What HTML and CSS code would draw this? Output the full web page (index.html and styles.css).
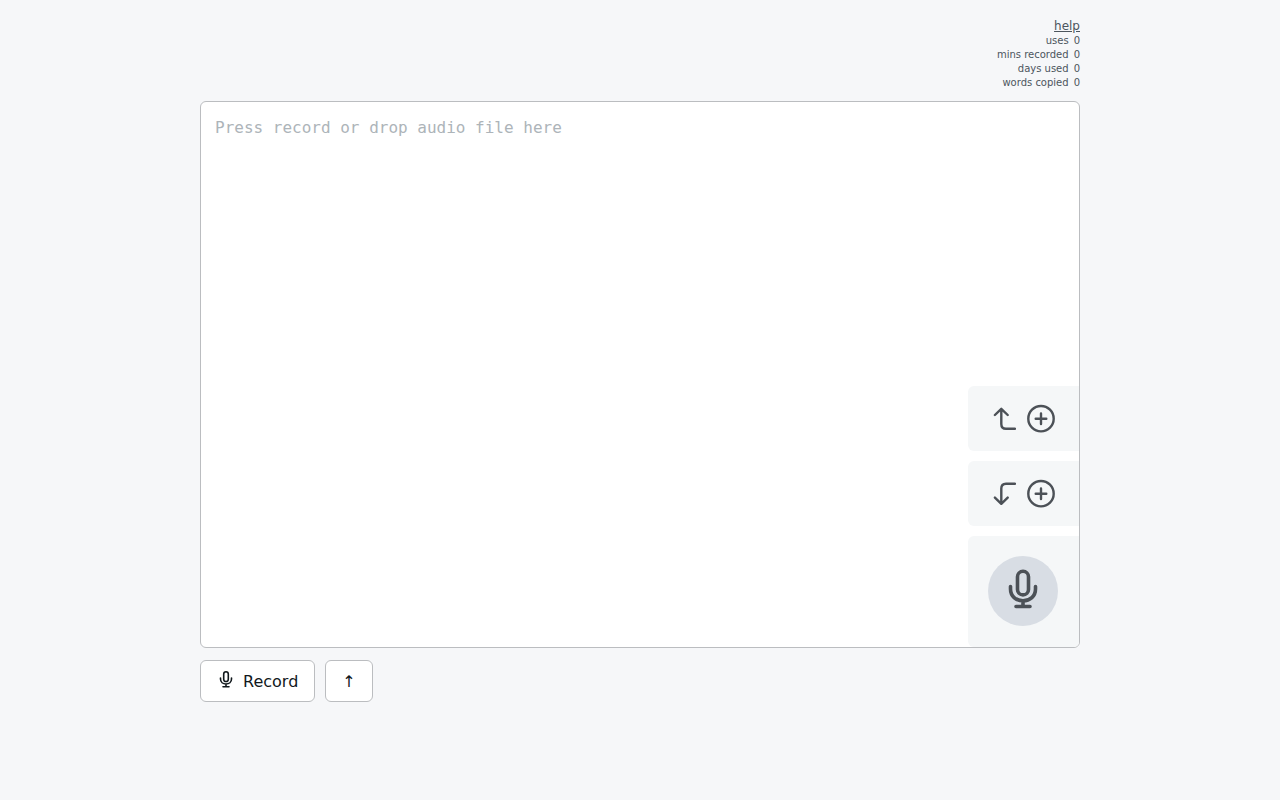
FILE: index.html
```html
<!DOCTYPE html>
<html lang="en">
<head>
<meta charset="utf-8">
<title>Voice recorder</title>
<meta name="viewport" content="width=device-width, initial-scale=1">
<link rel="stylesheet" href="styles.css">
</head>
<body>
<main class="page">
  <header class="top">
    <a class="help" href="#">help</a>
    <table class="stats">
      <tr><th scope="row">uses</th><td>0</td></tr>
      <tr><th scope="row">mins recorded</th><td>0</td></tr>
      <tr><th scope="row">days used</th><td>0</td></tr>
      <tr><th scope="row">words copied</th><td>0</td></tr>
    </table>
  </header>

  <section class="editor">
    <textarea class="text" aria-label="Transcript" placeholder="Press record or drop audio file here"></textarea>
    <div class="tools">
      <button class="tool" type="button" aria-label="Add above">
        <svg class="icon" width="24" height="31" viewBox="0 0 24 31"><path d="M2.900 12 9.300 5.800 15.700 12M9.300 6V21Q9.300 25.800 14 25.800H23"/></svg>
        <svg class="icon" width="30" height="31" viewBox="0 0 30 31"><circle cx="15" cy="15.700" r="12.700"/><path d="M15 10.400V21M9.700 15.700H20.300"/></svg>
      </button>
      <button class="tool" type="button" aria-label="Add below">
        <svg class="icon" width="24" height="31" viewBox="0 0 24 31"><path d="M2.900 19.600 9.300 25.800 15.700 19.600M9.300 25.600V10.600Q9.300 5.800 14 5.800H23"/></svg>
        <svg class="icon" width="30" height="31" viewBox="0 0 30 31"><circle cx="15" cy="15.700" r="12.700"/><path d="M15 10.400V21M9.700 15.700H20.300"/></svg>
      </button>
      <button class="tool tool-mic" type="button" aria-label="Record audio">
        <span class="disc">
          <svg class="icon icon-mic" width="40" height="44" viewBox="0 0 40 44"><rect x="14.500" y="2.300" width="11" height="23.600" rx="5.500"/><path d="M7.500 17.500V20C7.500 27.300 13 31.800 20 31.800S32.500 27.300 32.500 20V17.500M20 32V37.500M13 37.500H27"/></svg>
        </span>
      </button>
    </div>
  </section>

  <div class="actions">
    <button class="btn" type="button">
      <svg class="btn-icon" width="16" height="20" viewBox="0 0 16 20"><rect x="5.700" y="1.800" width="4.600" height="9.700" rx="2.300"/><path d="M2.500 8V9C2.500 12.200 5 14 8 14S13.500 12.200 13.500 9V8M8 14V16.800M5 16.800H11"/></svg>
      Record
    </button>
    <button class="btn" type="button" aria-label="Upload">↑</button>
  </div>
</main>
</body>
</html>
```
FILE: styles.css
```css
* {
  box-sizing: border-box;
}

body {
  margin: 0;
  background: #f6f7f9;
  color: #11181c;
  font-family: "DejaVu Sans", sans-serif;
}

.page {
  display: flex;
  flex-direction: column;
  min-height: 100vh;
  max-width: 880px;
  margin: 0 auto;
  padding: 18px 0 98px;
}

.top {
  display: flex;
  flex-direction: column;
  align-items: flex-end;
  margin-bottom: 11px;
  color: #4c555d;
}

.help {
  color: inherit;
  font-size: 12px;
  line-height: 16px;
}

.stats {
  border-spacing: 0;
  font-size: 10px;
  line-height: 14px;
  text-align: right;
}

.stats th,
.stats td {
  padding: 0;
  font-weight: normal;
  text-align: right;
}

.stats td {
  padding-left: 5px;
}

.editor {
  position: relative;
  display: flex;
  flex: 1;
  overflow: hidden;
  border: 1px solid #bbbdc0;
  border-radius: 6px;
  background: #fff;
}

.text {
  flex: 1;
  min-width: 0;
  padding: 14px;
  border: 0;
  outline: 0;
  resize: none;
  background: transparent;
  color: #11181c;
  font: 16px/24px "DejaVu Sans Mono", monospace;
}

.text::placeholder {
  color: #adb4b9;
  opacity: 1;
}

.tools {
  position: absolute;
  right: 0;
  bottom: 0;
  display: flex;
  flex-direction: column;
  gap: 10px;
}

.tool {
  display: flex;
  align-items: center;
  justify-content: center;
  gap: 10px;
  height: 65px;
  padding: 0 20px 0 21px;
  border: 0;
  border-radius: 6px 0 0 6px;
  background: #f5f7f8;
  color: #4c5157;
}

.tool-mic {
  height: auto;
  padding: 20px 21px 21px 20px;
}

.disc {
  display: flex;
  align-items: center;
  justify-content: center;
  width: 70px;
  height: 70px;
  border-radius: 50%;
  background: #d8dde4;
}

.icon,
.btn-icon {
  fill: none;
  stroke: currentColor;
  stroke-width: 2.4px;
  stroke-linecap: round;
  stroke-linejoin: round;
}

.icon-mic {
  stroke-width: 3.6px;
}

.actions {
  display: flex;
  gap: 10px;
  margin-top: 12px;
}

.btn {
  display: flex;
  align-items: center;
  gap: 9px;
  height: 42px;
  padding: 2px 16px 0 17px;
  border: 1px solid #bbbdc0;
  border-radius: 6px;
  background: #fff;
  color: #11181c;
  font: 16px/24px "DejaVu Sans", sans-serif;
}

.btn + .btn {
  padding: 2px 16px 0;
}

.btn-icon {
  margin-bottom: 4px;
  stroke-width: 1.6px;
}
```
